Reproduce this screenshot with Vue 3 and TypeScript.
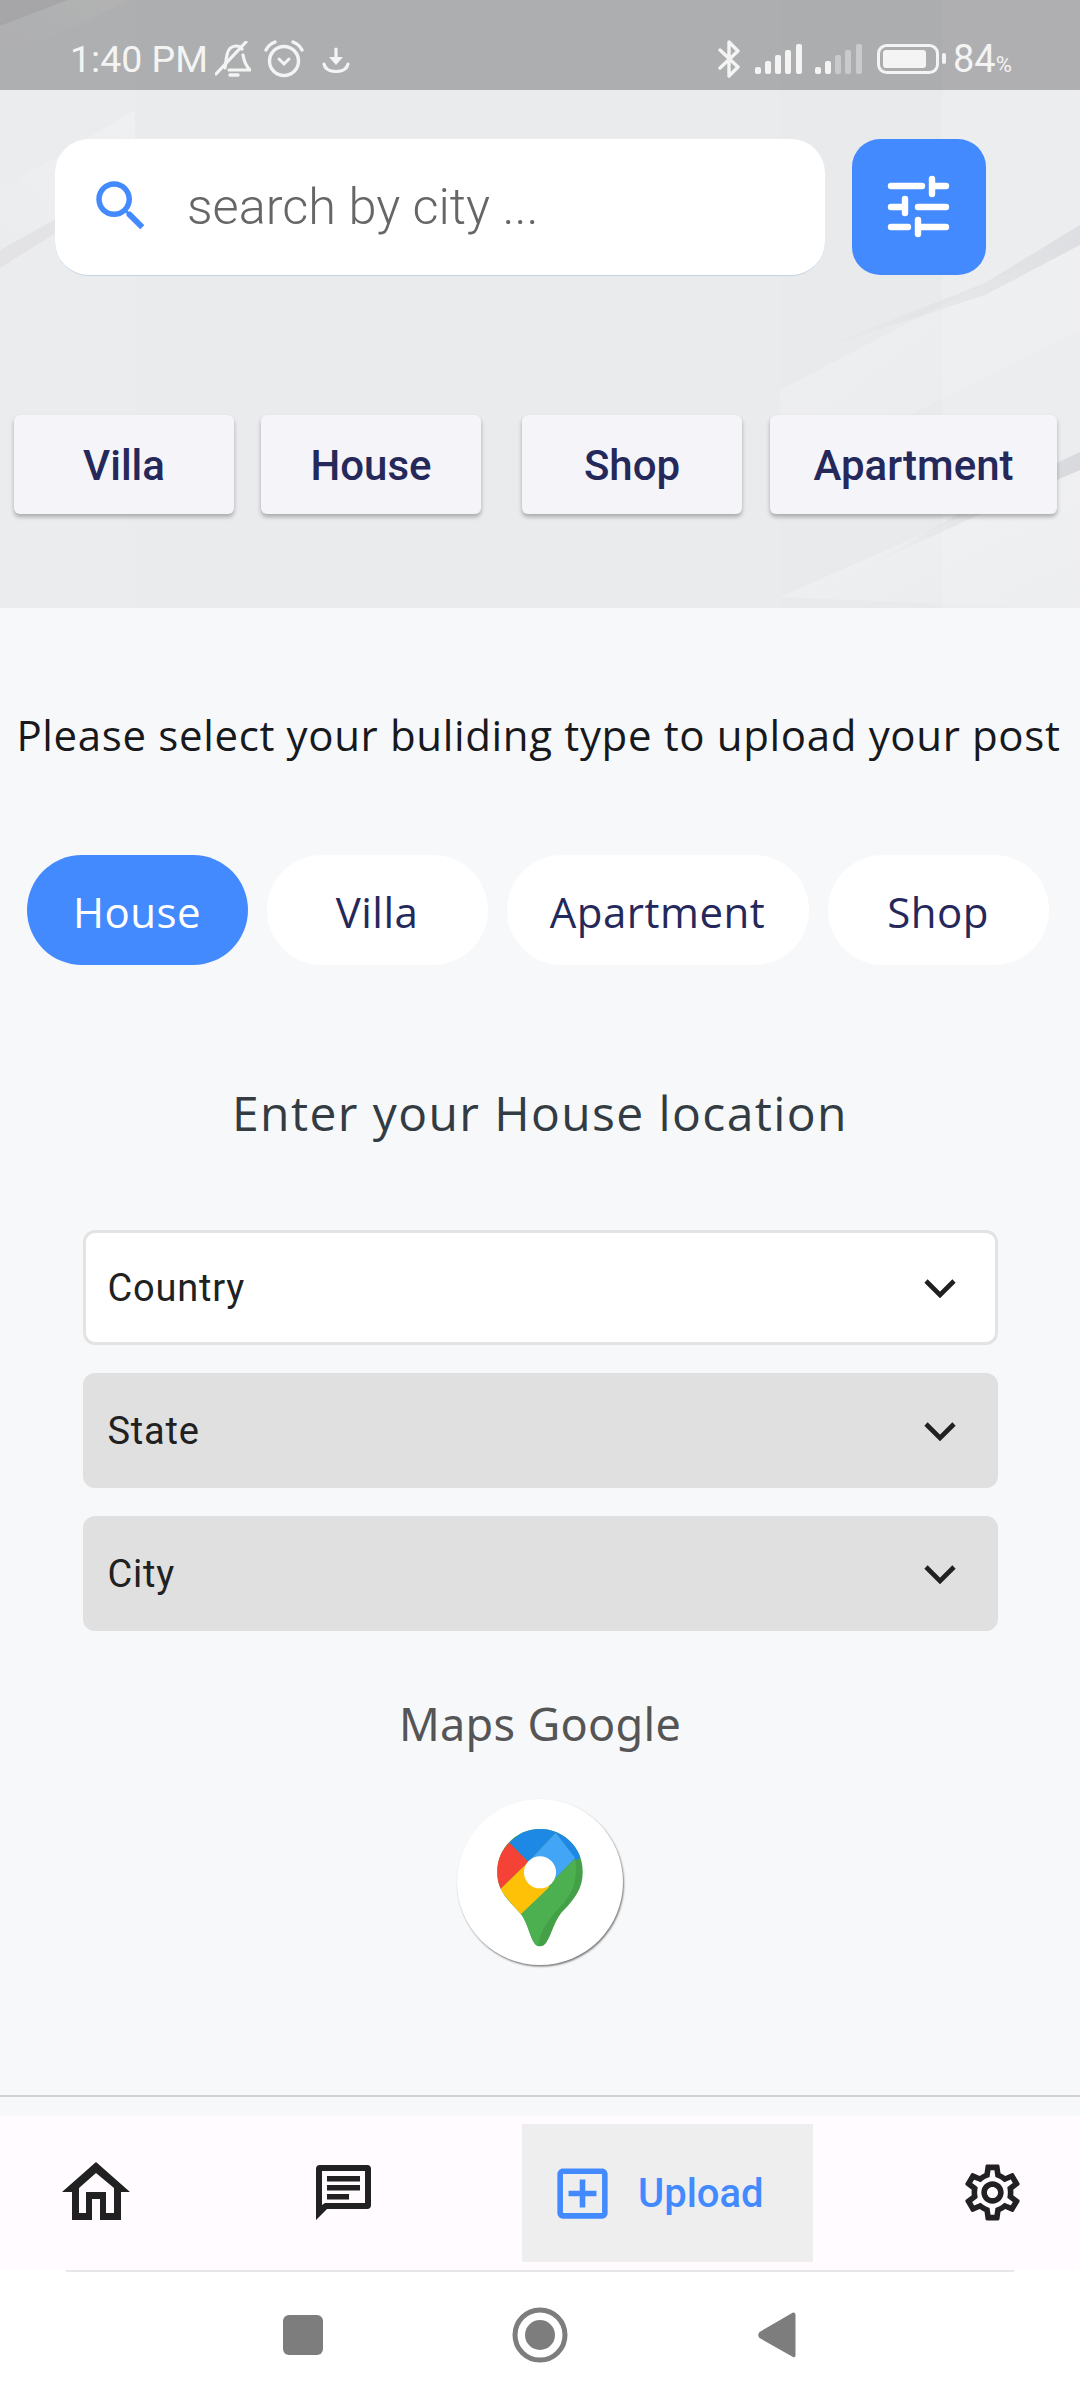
<script setup lang="ts">
const gearPath = 'M19.43 12.98c.04-.32.07-.64.07-.98 0-.34-.03-.66-.07-.98l2.11-1.65c.19-.15.24-.42.12-.64l-2-3.46c-.09-.16-.26-.25-.44-.25-.06 0-.12.01-.17.03l-2.49 1c-.52-.4-1.08-.73-1.69-.98l-.38-2.65C14.46 2.18 14.25 2 14 2h-4c-.25 0-.46.18-.49.42l-.38 2.65c-.61.25-1.17.59-1.69.98l-2.49-1c-.06-.02-.12-.03-.18-.03-.17 0-.34.09-.43.25l-2 3.46c-.13.22-.07.49.12.64l2.11 1.65c-.04.32-.07.65-.07.98 0 .33.03.66.07.98l-2.11 1.65c-.19.15-.24.42-.12.64l2 3.46c.09.16.26.25.44.25.06 0 .12-.01.17-.03l2.49-1c.52.4 1.08.73 1.69.98l.38 2.65c.03.24.24.42.49.42h4c.25 0 .46-.18.49-.42l.38-2.65c.61-.25 1.17-.59 1.69-.98l2.49 1c.06.02.12.03.18.03.17 0 .34-.09.43-.25l2-3.46c.12-.22.07-.49-.12-.64l-2.11-1.65zm-1.98-1.71c.04.31.05.52.05.73 0 .21-.02.43-.05.73l-.14 1.13.89.7 1.08.84-.7 1.21-1.27-.51-1.04-.42-.9.68c-.43.32-.84.56-1.25.73l-1.06.43-.16 1.13-.2 1.35h-1.4l-.19-1.35-.16-1.13-1.06-.43c-.43-.18-.83-.41-1.23-.71l-.91-.7-1.06.43-1.27.51-.7-1.21 1.08-.84.89-.7-.14-1.13c-.03-.31-.05-.54-.05-.74s.02-.43.05-.73l.14-1.13-.89-.7-1.08-.84.7-1.21 1.27.51 1.04.42.9-.68c.43-.32.84-.56 1.25-.73l1.06-.43.16-1.13.2-1.35h1.39l.19 1.35.16 1.13 1.06.43c.43.18.83.41 1.23.71l.91.7 1.06-.43 1.27-.51.7 1.21-1.07.85-.89.7.14 1.13zM12 8c-2.21 0-4 1.79-4 4s1.79 4 4 4 4-1.79 4-4-1.79-4-4-4zm0 6c-1.1 0-2-.9-2-2s.9-2 2-2 2 .9 2 2-.9 2-2 2z'
const tabs: string[] = ['Villa', 'House', 'Shop', 'Apartment']
const chips: string[] = ['House', 'Villa', 'Apartment', 'Shop']
const selects: string[] = ['Country', 'State', 'City']
const bars: { x: number; h: number }[] = [
  { x: 0, h: 7 },
  { x: 10, h: 13 },
  { x: 20, h: 19 },
  { x: 30, h: 24 },
  { x: 41, h: 30 },
]
</script>

<template>
  <div class="screen">
    <header class="hero">
      <svg class="hero-bg" width="1080" height="608" viewBox="0 0 1080 608" aria-hidden="true">
        <defs>
          <linearGradient id="lightA" x1="1" y1="0" x2="0" y2="1">
            <stop offset="0" stop-color="#f5f5f6" stop-opacity="0.9" />
            <stop offset="1" stop-color="#f5f5f6" stop-opacity="0" />
          </linearGradient>
          <linearGradient id="lightB" x1="0" y1="0" x2="1" y2="1">
            <stop offset="0" stop-color="#f4f4f6" stop-opacity="0.95" />
            <stop offset="1" stop-color="#f4f4f6" stop-opacity="0.1" />
          </linearGradient>
          <linearGradient id="darkA" x1="1" y1="0" x2="0" y2="0">
            <stop offset="0" stop-color="#d5d6d9" stop-opacity="0.9" />
            <stop offset="1" stop-color="#d5d6d9" stop-opacity="0" />
          </linearGradient>
        </defs>
        <rect width="1080" height="608" fill="#eaebed" />
        <rect x="0" y="0" width="135" height="608" fill="#ebecee" />
        <rect x="780" y="0" width="162" height="608" fill="#e9eaec" />
        <rect x="942" y="0" width="138" height="608" fill="#ecedef" />
        <polygon points="0,26 68,0 0,0" fill="#e0e1e4" />
        <polygon points="0,26 68,0 130,0 0,62" fill="url(#lightA)" opacity="0.6" />
        <polygon points="0,250 56,218 135,160 135,110 0,190" fill="url(#lightA)" opacity="0.55" />
        <polygon points="0,250 58,218 70,224 0,268" fill="#dfe0e3" opacity="0.7" />
        <polygon points="780,390 985,283 1080,245 1080,330 780,480" fill="url(#lightB)" opacity="0.6" />
        <polygon points="810,352 985,283 1080,225 1080,245 985,295" fill="url(#darkA)" opacity="0.7" />
        <polygon points="780,597 1000,500 1080,470 1080,608 1040,608" fill="url(#lightB)" opacity="0.85" />
        <polygon points="868,566 1000,505 1080,470 1080,452 1000,490" fill="url(#darkA)" opacity="0.95" />
      </svg>

      <div class="status">
        <span class="clock">1:40 PM</span>
        <svg class="bell" width="36" height="38" viewBox="0 0 36 38" fill="none" stroke="#f4f4f4" stroke-width="3.2" stroke-linecap="round">
          <path d="M10 27 C11 22 11 18 12 14 C13 8 17 5 21 5 C24 5 26 6 27 8" />
          <path d="M28 14 C29 20 31 25 35 29 H14" />
          <path d="M15 34 H23" stroke-width="3.5" />
          <path d="M1 33 L31 1" />
        </svg>
        <svg class="alarm" width="40" height="38" viewBox="0 0 40 38" fill="none" stroke="#f4f4f4" stroke-width="3.4" stroke-linecap="round">
          <circle cx="20" cy="21" r="14.5" />
          <path d="M2 10 C4 6 7 3.5 11 2" />
          <path d="M38 10 C36 6 33 3.5 29 2" />
          <path d="M15 19 L20 24 L25 19" stroke-width="3" />
        </svg>
        <svg class="down" width="28" height="26" viewBox="0 0 28 26" fill="none" stroke="#f4f4f4" stroke-width="3.2" stroke-linecap="round">
          <path d="M14 2 V12" />
          <path d="M7 10 L14 18 L21 10 Z" fill="#f4f4f4" stroke="none" />
          <path d="M2 17 C3 22 8 24.5 14 24.5 C20 24.5 25 22 26 17" />
        </svg>
        <svg class="bt" width="25" height="38" viewBox="0 0 25 38" fill="none" stroke="#f4f4f4" stroke-width="3.4" stroke-linecap="round" stroke-linejoin="round">
          <path d="M3 10 L21 27 L12 36 V2 L21 11 L3 28" />
        </svg>
        <svg class="sig" width="48" height="30" viewBox="0 0 48 30">
          <rect v-for="b in bars" :key="b.x" :x="b.x" :y="30 - b.h" width="6" :height="b.h" rx="2" fill="#f4f4f4" />
        </svg>
        <svg class="sig second" width="48" height="30" viewBox="0 0 48 30">
          <rect v-for="(b, i) in bars" :key="b.x" :x="b.x" :y="30 - b.h" width="6" :height="b.h" rx="2" fill="#f4f4f4" :opacity="i < 2 ? 1 : 0.4" />
        </svg>
        <svg class="batt" width="70" height="30" viewBox="0 0 70 30">
          <rect x="1.5" y="1.5" width="59" height="27" rx="8" fill="none" stroke="#f4f4f4" stroke-width="3" />
          <rect x="6" y="6" width="43" height="18" rx="3" fill="#f4f4f4" />
          <rect x="65" y="9" width="4" height="11" rx="2" fill="#f4f4f4" />
        </svg>
        <span class="pct">84<small>%</small></span>
      </div>

      <div class="search-row">
        <div class="search">
          <svg class="search-icon" width="66" height="66" viewBox="0 0 24 24" fill="#448aff">
            <path d="M15.5 14h-.79l-.28-.27C15.41 12.59 16 11.11 16 9.5 16 5.91 13.09 3 9.5 3S3 5.91 3 9.5 5.91 16 9.5 16c1.61 0 3.09-.59 4.23-1.57l.27.28v.79l5 4.99L20.49 19l-4.99-5zm-6 0C7.01 14 5 11.99 5 9.5S7.01 5 9.5 5 14 7.01 14 9.5 11.99 14 9.5 14z" />
          </svg>
          <span class="placeholder">search by city ...</span>
        </div>
        <button class="filter" type="button" aria-label="Filter">
          <svg width="66" height="66" viewBox="-2 -2 66 66" fill="none" stroke="#fff" stroke-width="6.4" stroke-linecap="round">
            <path d="M3 10 H34 M44 3 V18 M44 10 H58" />
            <path d="M3 31 H14 M17 23 V37 M30 31 H58" />
            <path d="M3 51 H20 M30 44 V58 M30 51 H58" />
          </svg>
        </button>
      </div>

      <div class="tabs">
        <div v-for="t in tabs" :key="t" class="tab">{{ t }}</div>
      </div>
    </header>

    <main class="body">
      <p class="title">Please select your buliding type to upload your post</p>
      <div class="chips">
        <div v-for="(c, i) in chips" :key="c" class="chip" :class="{ active: i === 0 }">{{ c }}</div>
      </div>
      <h2 class="location">Enter your House location</h2>
      <div class="selects">
        <div v-for="(s, i) in selects" :key="s" class="select" :class="{ enabled: i === 0 }">
          <span>{{ s }}</span>
          <svg width="32" height="20" viewBox="0 0 32 20" fill="none" stroke="#212121" stroke-width="4.6">
            <path d="M2 3 L16 17 L30 3" />
          </svg>
        </div>
      </div>
      <h3 class="maps-label">Maps Google</h3>
      <div class="maps-btn">
        <svg width="166" height="166" viewBox="172 357 496 496" aria-label="Google Maps">
          <defs>
            <clipPath id="pin">
              <path d="M420 447 C491 447 548 504 548 575 C548 625 520 660 490 690 C455 725 450 798 420 798 C392 798 390 735 362 700 C325 660 292 630 292 575 C292 504 349 447 420 447Z" />
            </clipPath>
          </defs>
          <g clip-path="url(#pin)">
            <rect x="270" y="430" width="300" height="380" fill="#43a047" />
            <path d="M525 535 L362 700 C390 735 392 798 415 798 C420 750 450 710 480 680 C515 645 535 600 525 535Z" fill="#4caf50" />
            <polygon points="328,487 400,430 500,440 467,458 385,545" fill="#1e88e5" />
            <polygon points="467,458 500,440 560,525 525,540" fill="#1e88e5" />
            <polygon points="467,458 525,533 450,610 385,545" fill="#42a5f5" />
            <polygon points="328,487 385,545 300,628 270,560" fill="#f44336" />
            <polygon points="300,628 385,545 448,620 362,702" fill="#ffc107" />
          </g>
          <circle cx="420" cy="576" r="48" fill="#fff" />
        </svg>
      </div>
    </main>

    <div class="rule"></div>

    <nav class="nav">
      <svg class="i-home" width="68" height="60" viewBox="0 0 68 60" fill="#212121" fill-rule="evenodd">
        <path d="M34 0 L68 30 H59 V58 H38 V37 H30 V58 H10 V30 H0 Z M34 11 L17 26 V51 H24 V30 H44 V51 H52 V26 Z" />
      </svg>
      <svg class="i-chat" width="56" height="56" viewBox="0 0 56 56" fill="#212121" fill-rule="evenodd">
        <path d="M4 0 H51 A4 4 0 0 1 55 4 V40 A4 4 0 0 1 51 44 H11 L0 55 V4 A4 4 0 0 1 4 0 Z M6 6 V40 L9 38 H49 V6 Z" />
        <rect x="11" y="11" width="33" height="5.5" />
        <rect x="11" y="20" width="33" height="5.5" />
        <rect x="11" y="29" width="22" height="5.5" />
      </svg>
      <div class="upload">
        <svg width="67" height="67" viewBox="0 0 24 24" fill="#448aff">
          <path d="M19 3H5c-1.100 0-2 .9-2 2v14c0 1.100.9 2 2 2h14c1.100 0 2-.9 2-2V5c0-1.100-.9-2-2-2zm0 16H5V5h14v14zm-8-2h2v-4h4v-2h-4V7h-2v4H7v2h4z" />
        </svg>
        <span>Upload</span>
      </div>
      <svg class="i-gear" width="67" height="67" viewBox="0 0 24 24" fill="#212121">
        <path :d="gearPath" />
      </svg>
    </nav>

    <footer class="sysbar">
      <div class="sys-line"></div>
      <div class="sys-btns">
        <div class="sys-square"></div>
        <svg class="sys-circle" width="56" height="56" viewBox="0 0 56 56">
          <circle cx="28" cy="28" r="25" fill="none" stroke="#7d7d7d" stroke-width="5" />
          <circle cx="28" cy="28" r="15" fill="#7d7d7d" />
        </svg>
        <svg class="sys-back" width="38" height="46" viewBox="0 0 38 46">
          <path d="M35 0.500 Q37.500 0 37.500 3 V43 Q37.500 46 35 45 L1.500 26 Q-1 23 1.500 20 Z" fill="#7d7d7d" />
        </svg>
      </div>
    </footer>
  </div>
</template>

<style>
html, body { margin: 0; padding: 0; background: #f7f8fa; }
</style>

<style scoped>
.screen {
  width: 1080px;
  height: 2400px;
  display: flex;
  flex-direction: column;
  background: #f7f8fa;
  overflow: hidden;
  font-family: Roboto, "Liberation Sans", sans-serif;
}
.hero {
  position: relative;
  height: 608px;
  flex: none;
  display: flex;
  flex-direction: column;
}
.hero-bg { position: absolute; left: 0; top: 0; }
.status {
  position: relative;
  height: 90px;
  flex: none;
  box-sizing: border-box;
  padding-left: 70px;
  display: flex;
  align-items: flex-start;
  background: rgba(0, 0, 0, 0.26);
  color: #f4f4f4;
}
.clock { font-size: 37.500px; line-height: 42px; margin-top: 38px; width: 135px; white-space: nowrap; }
.bell { margin: 41px 0 0 10px; }
.alarm { margin: 40px 0 0 13px; }
.down { margin: 47px 0 0 18px; }
.bt { margin: 40px 0 0 367px; }
.sig { margin: 44px 0 0 13px; }
.second { margin-left: 12px; }
.batt { margin: 44px 0 0 14px; }
.pct { font-size: 38px; line-height: 42px; margin: 38px 0 0 6px; white-space: nowrap; }
.pct small { font-size: 22px; }
.search-row {
  position: relative;
  display: flex;
  margin: 49px 0 0 55px;
  gap: 27px;
}
.search {
  width: 770px;
  height: 137px;
  box-sizing: border-box;
  background: #fff;
  border-radius: 34px;
  border-bottom: 1px solid #c5d3e4;
  display: flex;
  align-items: center;
  padding: 0 0 2px 33px;
}
.search-icon { flex: none; margin-top: -1px; }
.placeholder {
  font-size: 50.500px;
  font-weight: 300;
  color: #666;
  margin-left: 33px;
  white-space: nowrap;
}
.filter {
  width: 134px;
  height: 136px;
  padding: 0;
  border: 0;
  background: #448aff;
  border-radius: 28px;
  display: flex;
  align-items: center;
  justify-content: center;
}
.tabs {
  position: relative;
  display: flex;
  margin: 139px 0 0 14px;
}
.tab {
  width: 220px;
  height: 99px;
  box-sizing: border-box;
  padding-top: 2px;
  background: #f4f4f9;
  border-radius: 6px;
  box-shadow: 0 3px 4px rgba(0, 0, 0, 0.28);
  display: flex;
  align-items: center;
  justify-content: center;
  font-size: 42px;
  font-weight: 500;
  color: #25285a;
}
.tab:nth-child(2) { margin-left: 27px; }
.tab:nth-child(3) { margin-left: 41px; }
.tab:nth-child(4) { margin-left: 28px; width: 287px; }
.body {
  flex: 1;
  display: flex;
  flex-direction: column;
  align-items: center;
  min-height: 0;
}
.title {
  margin: 99px 3px 0 0;
  height: 56px;
  line-height: 56px;
  font-family: "Open Sans", sans-serif;
  font-size: 42px;
  letter-spacing: 0.65px;
  color: #17191c;
  white-space: nowrap;
}
.chips {
  display: flex;
  margin: 92px 5px 0 0;
  gap: 19px;
}
.chip {
  width: 221px;
  height: 110px;
  box-sizing: border-box;
  padding-top: 2px;
  border-radius: 55px;
  background: #fff;
  display: flex;
  align-items: center;
  justify-content: center;
  font-family: "Open Sans", sans-serif;
  font-size: 42px;
  letter-spacing: 0.5px;
  color: #25285a;
}
.chip:nth-child(3) { width: 302px; }
.chip.active { background: #448aff; color: #fff; }
.location {
  margin: 116px 0 0;
  height: 64px;
  line-height: 64px;
  font-family: "Open Sans", sans-serif;
  font-size: 48px;
  font-weight: 400;
  letter-spacing: 1.4px;
  color: #323c42;
  white-space: nowrap;
}
.selects {
  display: flex;
  flex-direction: column;
  gap: 28px;
  margin-top: 85px;
}
.select {
  width: 915px;
  height: 115px;
  box-sizing: border-box;
  background: #e0e0e0;
  border-radius: 12px;
  display: flex;
  align-items: center;
  justify-content: space-between;
  padding: 0 42px 0 25px;
  font-size: 38px;
  letter-spacing: 0.8px;
  color: #212121;
}
.select.enabled { background: #fff; border: 3px solid #e3e3e3; padding: 0 39px 0 22px; }
.maps-label {
  margin: 61px 0 0;
  height: 64px;
  line-height: 64px;
  font-family: "Noto Sans", sans-serif;
  font-size: 45px;
  font-weight: 400;
  letter-spacing: 0.3px;
  color: #555;
  white-space: nowrap;
}
.maps-btn {
  margin-top: 43px;
  width: 166px;
  height: 166px;
  border-radius: 50%;
  background: #fff;
  box-shadow: 1px 1.500px 2px rgba(0, 0, 0, 0.5);
}
.rule {
  flex: none;
  height: 2px;
  background: #cfcfd4;
  margin-bottom: 19px;
}
.nav {
  flex: none;
  height: 154px;
  background: #fffbff;
  display: flex;
  align-items: flex-start;
}
.i-home { margin: 46px 0 0 62px; flex: none; }
.i-chat { margin: 49px 0 0 186px; flex: none; }
.upload {
  margin: 8px 0 0 150px;
  width: 291px;
  height: 138px;
  flex: none;
  box-sizing: border-box;
  padding-left: 27px;
  background: #eeeeee;
  display: flex;
  align-items: center;
  font-size: 40px;
  font-weight: 500;
  color: #448aff;
}
.upload span { margin-left: 22px; }
.i-gear { margin: 43px 0 0 146px; flex: none; }
.sysbar {
  flex: none;
  height: 130px;
  background: #fff;
  display: flex;
  flex-direction: column;
}
.sys-line { height: 2px; margin: 0 66px; background: #e6e6e6; }
.sys-btns {
  position: relative;
  height: 128px;
  box-sizing: border-box;
  padding-bottom: 2px;
  display: flex;
  align-items: center;
}
.sys-square {
  width: 40px;
  height: 40px;
  margin-left: 283px;
  border-radius: 6px;
  background: #7d7d7d;
}
.sys-circle { margin-left: 189px; }
.sys-back { margin-left: 190px; }
</style>
